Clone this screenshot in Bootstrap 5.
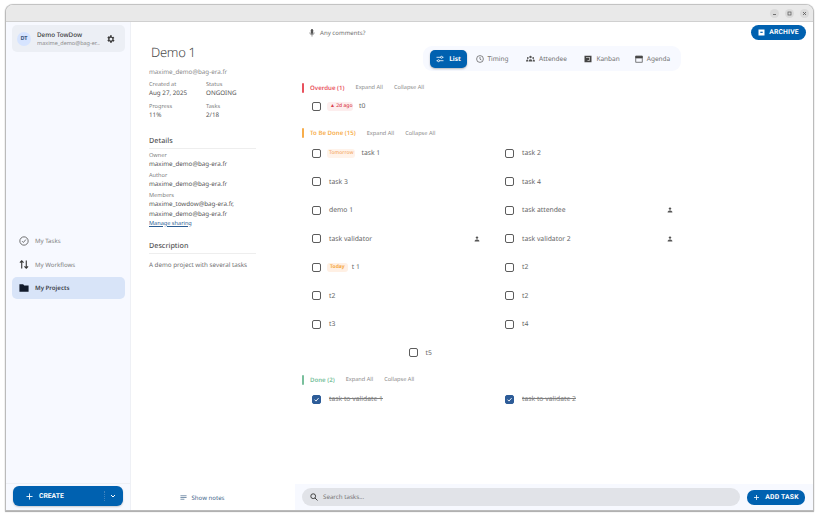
<!DOCTYPE html>
<html lang="en">
<head>
<meta charset="utf-8">
<title>Demo 1</title>
<link href="https://cdn.jsdelivr.net/npm/bootstrap@5.3.0/dist/css/bootstrap.min.css" rel="stylesheet">
<style>
html,body{height:517px;overflow:hidden;background:#fff}
body{font-family:"Noto Sans",sans-serif;font-size:7px;color:#555;padding:5px 6px 7px 6px;text-rendering:geometricPrecision}
.win{width:807px;height:505px;border-radius:7px 7px 0 0;box-shadow:0 0 1px 1px #bdbdbd,0 1px 1px 1px #a8a8a8;overflow:hidden;background:#fff;display:flex;flex-direction:column}
.tbar{height:17px;flex:none;background:#e9e9e9;border-bottom:1px solid #d0d0d0;padding-right:4px;gap:6px}
.wbtn{width:9px;height:9px;border-radius:50%;background:#dadada;display:flex;align-items:center;justify-content:center}
.wmain{flex:1;min-height:0}
.side{width:125px;flex:none;background:#f7f9ff;border-right:1px solid #eef0f5;padding:3px 5px 4px 6px}
.acct{height:27px;background:#eceff5;border-radius:5px;padding:0 9px 0 5px;gap:6px}
.avat{width:14px;height:14px;border-radius:50%;background:#d6e4ff;color:#3d5a80;font-size:5.5px;font-weight:700;display:flex;align-items:center;justify-content:center;flex:none}
.aname{font-size:6.3px;font-weight:500;color:#3a3a3a;line-height:8px}
.amail{font-size:5.5px;color:#8a8a8a;line-height:8px;white-space:nowrap}
.snav{height:22px;border-radius:5px;padding:0 7px;gap:6px;font-size:6.1px;color:#808080;margin-bottom:1.5px}
.snav.act{background:#d8e4f8;color:#3a3f4a;font-weight:600;margin-bottom:0}
.navgap{height:184px;flex:none}
.sfoot{border-top:1px solid #eef0f5;margin:0 -5px 0 -6px;padding:2px 6px 0 7px}
.crbtn{height:20px;width:110px;background:#0061b0;color:#fff;border-radius:6px;font-family:Roboto,sans-serif;font-size:6.8px;font-weight:700;padding:0 7px 0 13px;gap:6px;box-shadow:0 1px 2px #0003}
.crsep{border-left:1px dotted #3f83bd;height:10px;margin-right:-1px}
.proj{width:164px;flex:none;padding:0 0 0 18px}
.ptitle{font-size:13px;font-weight:300;letter-spacing:-.3px;color:#4a4a4a;line-height:20px;margin:20px 0 0 2px}
.pmail{font-size:6.25px;color:#8a8a8a;line-height:9px;margin-top:5px;margin-bottom:4px}
.lbl{font-size:5.6px;color:#808080;line-height:8px}
.val{font-size:6.25px;color:#555;line-height:10px}
.mcol{width:57px}
.stat2{margin-top:4px}
.sec{width:107px;font-size:7.2px;font-weight:500;color:#555;line-height:11px;border-bottom:1px solid #eee;padding-bottom:1px}
.sec1{margin-top:15.5px}
.sec2{margin-top:14.5px}
.g1{margin-top:2px}
.g2{margin-top:2px}
.mshare{font-size:5.6px;color:#2b5d93;text-decoration:underline;line-height:8px;display:block}
.ddesc{margin-top:6px;color:#707070}
.notes{height:25px;color:#46688c;font-size:6.1px;gap:4px;width:107px}
.mpane{flex:1;min-width:0}
.mtop{height:24px;padding:3px 7px 0 14px}
.cmt{font-size:6.1px;color:#707070;gap:5px;height:15px}
.arcbtn{height:15px;width:55px;background:#0061b0;color:#fff;border-radius:8px;font-family:Roboto,sans-serif;font-size:6.8px;font-weight:700;gap:4px;letter-spacing:.15px}
.tabwrap{height:25px;width:258px;background:#f7f9ff;border-radius:9px;margin-left:128px;padding:0 7px;gap:17.5px}
.tabi{height:18px;font-size:6.5px;color:#707070;gap:4px;flex:none}
.tabi.act{background:#0061b0;color:#fff;font-weight:700;border-radius:5px;width:37px;justify-content:center;box-shadow:0 1px 2px #0004;margin-right:-9px;gap:5px}
.tabi.tend{margin-left:-2.5px}
.lscroll{flex:1;min-height:0;padding:0 0 0 7px}
.ghead{height:11px;gap:11px;font-size:6.1px}
.gh1{margin-top:11px}
.gh2{margin-top:8px}
.gh3{margin-top:7px}
.gbar{width:2px;height:10px;border-radius:1px;margin-right:-5px}
.gt{font-weight:600}
.gbtn{color:#8a8a8a;font-size:5.6px}
.tgrid{width:386px;display:flex;flex-wrap:wrap;justify-content:center;margin-left:4px}
.tleft{justify-content:flex-start;margin-top:-.5px}
.tmid{margin-top:.5px}
.titem{width:193px;height:28.5px;padding:0 19px 0 6px;gap:8px;font-size:6.8px;color:#666}
.tshort{height:27px}
.cbx{width:9px;height:9px;border:1px solid #5c5c5c;border-radius:2px;flex:none;display:flex;align-items:center;justify-content:center}
.cbx.on{background:#2d5c98;border-color:#2d5c98}
.tdone{text-decoration:line-through;color:#808080}
.chip{font-size:5px;border-radius:3px;padding:0 3px;height:9px;line-height:9px;white-space:nowrap;font-weight:500;margin:0 -2px}
.chip.red{background:#fdeeee;color:#d9404c;width:26px}
.chip.org{background:#fff3ea;color:#f4ab6c;padding:0 2px}
.chip.tod{background:#fff0e4;color:#f5a843;font-weight:700;margin-right:-4px}
.mfoot{height:26px;background:#f7f9ff;padding:0 8px 0 7px;gap:7px}
.srch{flex:1;height:18px;background:#e1e3e8;border-radius:9px;padding:0 7px 0 8px;gap:5px;font-size:6.2px;color:#777}
.addbtn{width:58px;height:15px;background:#0061b0;color:#fff;border-radius:7px;font-family:Roboto,sans-serif;font-size:6.8px;font-weight:700;gap:5px;letter-spacing:.2px}
.bg-ov{background:#e8515d}.c-ov{color:#e8515d}
.bg-td{background:#f7ad4b}.c-td{color:#f7ad4b}
.bg-dn{background:#79bf9c}.c-dn{color:#79bf9c}
</style>
</head>
<body>
<div class="win">
  <div class="tbar d-flex align-items-center justify-content-end">
    <span class="wbtn"><svg width="5" height="5" viewBox="0 0 5 5"><path d="M1 3.500h3" stroke="#555" stroke-width=".8"/></svg></span>
    <span class="wbtn"><svg width="5" height="5" viewBox="0 0 5 5"><rect x="1" y="1" width="3" height="3" fill="none" stroke="#555" stroke-width=".7"/></svg></span>
    <span class="wbtn"><svg width="5" height="5" viewBox="0 0 5 5"><path d="M1 1l3 3M4 1L1 4" stroke="#555" stroke-width=".8"/></svg></span>
  </div>
  <div class="wmain d-flex">
    <aside class="side d-flex flex-column">
      <div class="acct d-flex align-items-center">
        <span class="avat">DT</span>
        <div class="flex-grow-1 overflow-hidden">
          <div class="aname">Demo TowDow</div>
          <div class="amail">maxime_demo@bag-er...</div>
        </div>
        <svg width="10" height="10" viewBox="0 0 24 24" fill="#3c3c3c"><path fill-rule="evenodd" d="M19.400 13a7.500 7.500 0 0 0 0-2l2.100-1.600-2-3.500-2.500 1a7.500 7.500 0 0 0-1.700-1L15.400 2.300h-4L11 4.900a7.500 7.500 0 0 0-1.700 1l-2.500-1-2 3.500L6.900 11a7.500 7.500 0 0 0 0 2l-2.100 1.600 2 3.500 2.500-1a7.500 7.500 0 0 0 1.700 1l.4 2.600h4l.4-2.600a7.500 7.500 0 0 0 1.700-1l2.500 1 2-3.500zM13.400 15.500a3.500 3.500 0 1 1 0-7 3.500 3.500 0 0 1 0 7z" transform="translate(-1.400 .4)"/></svg>
      </div>
      <div class="mt-auto">
        <div class="snav d-flex align-items-center">
          <svg width="10" height="10" viewBox="0 0 24 24" fill="none" stroke="#555" stroke-width="2"><circle cx="12" cy="12" r="10"/><path d="M7.500 12.500l3 3 6-7"/></svg>My Tasks</div>
        <div class="snav d-flex align-items-center">
          <svg width="10" height="11" viewBox="0 0 22 24" fill="none" stroke="#333" stroke-width="2.400"><path d="M6 21V4M2 8l4-4 4 4M16 3v17M12 16l4 4 4-4"/></svg>My Workflows</div>
        <div class="snav act d-flex align-items-center">
          <svg width="10" height="10" viewBox="0 0 24 24" fill="#111a2b"><path d="M1 3h9l2.500 3H23v15H1z"/></svg>My Projects</div>
      </div>
      <div class="navgap"></div>
      <div class="sfoot">
        <div class="crbtn d-flex align-items-center">
          <svg width="7" height="7" viewBox="0 0 8 8"><path d="M4 .5v7M.5 4h7" stroke="#fff" stroke-width="1"/></svg>CREATE
          <span class="crsep ms-auto"></span>
          <svg width="6" height="6" viewBox="0 0 6 6"><path d="M1 2l2 2 2-2" stroke="#fff" fill="none" stroke-width="1"/></svg>
        </div>
      </div>
    </aside>
    <section class="proj d-flex flex-column">
      <div class="ptitle">Demo 1</div>
      <div class="pmail">maxime_demo@bag-era.fr</div>
      <div class="d-flex"><div class="mcol"><div class="lbl">Created at</div><div class="val">Aug 27, 2025</div></div><div><div class="lbl">Status</div><div class="val">ONGOING</div></div></div>
      <div class="d-flex stat2"><div class="mcol"><div class="lbl">Progress</div><div class="val">11%</div></div><div><div class="lbl">Tasks</div><div class="val">2/18</div></div></div>
      <div class="sec sec1">Details</div>
      <div class="lbl g1">Owner</div><div class="val">maxime_demo@bag-era.fr</div>
      <div class="lbl g2">Author</div><div class="val">maxime_demo@bag-era.fr</div>
      <div class="lbl g2">Members</div><div class="val">maxime_towdow@bag-era.fr,</div><div class="val">maxime_demo@bag-era.fr</div>
      <a class="mshare" href="#">Manage sharing</a>
      <div class="sec sec2">Description</div>
      <div class="val ddesc">A demo project with several tasks</div>
      <div class="notes d-flex align-items-center justify-content-center mt-auto">
        <svg width="7" height="7" viewBox="0 0 8 8"><path d="M.5 2h7M.5 4h7M.5 6h4.500" stroke="#46688c" stroke-width=".8"/></svg>Show notes</div>
    </section>
    <main class="mpane d-flex flex-column">
      <div class="mtop d-flex justify-content-between align-items-start">
        <div class="cmt d-flex align-items-center">
          <svg width="6" height="8" viewBox="0 0 6 8" fill="#555"><rect x="1.800" y="0" width="2.400" height="5" rx="1.200"/><path d="M.8 3.500a2.200 2.200 0 0 0 4.400 0M3 5.700V7.600" stroke="#555" stroke-width=".6" fill="none"/></svg>
          Any comments?</div>
        <div class="arcbtn d-flex align-items-center justify-content-center">
          <svg width="7" height="7" viewBox="0 0 7 7"><path d="M.5.500h6v6h-6z" fill="#fff"/><rect x="2.300" y="2.700" width="2.400" height="1.200" fill="#0061b0"/></svg>ARCHIVE</div>
      </div>
      <div class="tabwrap d-flex align-items-center">
        <div class="tabi act d-flex align-items-center"><svg width="8" height="8" viewBox="0 0 8 8" fill="none" stroke="#fff" stroke-width=".8"><path d="M.5 2.300h7M.5 5.700h7"/><circle cx="5.500" cy="2.300" r="1" fill="#0061b0"/><circle cx="2.500" cy="5.700" r="1" fill="#0061b0"/></svg>List</div>
        <div class="tabi d-flex align-items-center"><svg width="8" height="8" viewBox="0 0 8 8" fill="none" stroke="#555" stroke-width=".7"><circle cx="4" cy="4" r="3.400"/><path d="M4 2v2.200l1.400.8"/></svg>Timing</div>
        <div class="tabi d-flex align-items-center"><svg width="9" height="7" viewBox="0 0 9 7" fill="#555"><circle cx="4.500" cy="2" r="1.200"/><circle cx="1.800" cy="3" r=".9"/><circle cx="7.200" cy="3" r=".9"/><path d="M2.500 6.500c0-3 4-3 4 0zM0 6.500c0-2.200 2-2.200 2-1.500v1.500zM9 6.500c0-2.200-2-2.200-2-1.500v1.500z"/></svg>Attendee</div>
        <div class="tabi d-flex align-items-center"><svg width="8" height="8" viewBox="0 0 8 8" fill="#444"><path d="M.5.800h7v6.400h-7z"/><path d="M2 2.500h4M5.500 2.500v3H3.500" stroke="#eee" stroke-width=".6" fill="none"/></svg>Kanban</div>
        <div class="tabi tend d-flex align-items-center"><svg width="8" height="8" viewBox="0 0 8 8" fill="none" stroke="#444" stroke-width=".7"><rect x=".8" y="1.200" width="6.400" height="6"/><path d="M.8 1.200h6.400v1.800H.8z" fill="#444"/></svg>Agenda</div>
      </div>
      <div class="lscroll d-flex flex-column">
        <div class="ghead gh1 d-flex align-items-center"><span class="gbar bg-ov"></span><span class="gt c-ov">Overdue (1)</span><span class="gbtn">Expand All</span><span class="gbtn">Collapse All</span></div>
        <div class="tgrid tleft">
          <div class="titem tshort d-flex align-items-center"><span class="cbx"></span><span class="chip red">▲ 2d ago</span><span>t0</span></div>
        </div>
        <div class="ghead gh2 d-flex align-items-center"><span class="gbar bg-td"></span><span class="gt c-td">To Be Done (15)</span><span class="gbtn">Expand All</span><span class="gbtn">Collapse All</span></div>
        <div class="tgrid tmid">
          <div class="titem d-flex align-items-center"><span class="cbx"></span><span class="chip org">Tomorrow</span><span>task 1</span></div>
          <div class="titem d-flex align-items-center"><span class="cbx"></span>task 2</div>
          <div class="titem d-flex align-items-center"><span class="cbx"></span>task 3</div>
          <div class="titem d-flex align-items-center"><span class="cbx"></span>task 4</div>
          <div class="titem d-flex align-items-center"><span class="cbx"></span>demo 1</div>
          <div class="titem d-flex align-items-center justify-content-between"><span class="d-flex align-items-center gap-2"><span class="cbx"></span>task attendee</span><svg width="6" height="6" viewBox="0 0 6 6" fill="#555"><circle cx="3" cy="1.600" r="1.200"/><path d="M.6 5.500c0-2.600 4.800-2.600 4.800 0z"/></svg></div>
          <div class="titem d-flex align-items-center justify-content-between"><span class="d-flex align-items-center gap-2"><span class="cbx"></span>task validator</span><svg width="6" height="6" viewBox="0 0 6 6" fill="#555"><circle cx="3" cy="1.600" r="1.200"/><path d="M.6 5.500c0-2.600 4.800-2.600 4.800 0z"/></svg></div>
          <div class="titem d-flex align-items-center justify-content-between"><span class="d-flex align-items-center gap-2"><span class="cbx"></span>task validator 2</span><svg width="6" height="6" viewBox="0 0 6 6" fill="#555"><circle cx="3" cy="1.600" r="1.200"/><path d="M.6 5.500c0-2.600 4.800-2.600 4.800 0z"/></svg></div>
          <div class="titem d-flex align-items-center"><span class="cbx"></span><span class="chip tod">Today</span><span>t 1</span></div>
          <div class="titem d-flex align-items-center"><span class="cbx"></span>t2</div>
          <div class="titem d-flex align-items-center"><span class="cbx"></span>t2</div>
          <div class="titem d-flex align-items-center"><span class="cbx"></span>t2</div>
          <div class="titem d-flex align-items-center"><span class="cbx"></span>t3</div>
          <div class="titem d-flex align-items-center"><span class="cbx"></span>t4</div>
          <div class="titem d-flex align-items-center"><span class="cbx"></span>t5</div>
        </div>
        <div class="ghead gh3 d-flex align-items-center"><span class="gbar bg-dn"></span><span class="gt c-dn">Done (2)</span><span class="gbtn">Expand All</span><span class="gbtn">Collapse All</span></div>
        <div class="tgrid">
          <div class="titem d-flex align-items-center"><span class="cbx on"><svg width="7" height="7" viewBox="0 0 7 7"><path d="M1.500 3.600l1.500 1.500 2.600-3" stroke="#fff" fill="none" stroke-width=".9"/></svg></span><span class="tdone">task to validate 1</span></div>
          <div class="titem d-flex align-items-center"><span class="cbx on"><svg width="7" height="7" viewBox="0 0 7 7"><path d="M1.500 3.600l1.500 1.500 2.600-3" stroke="#fff" fill="none" stroke-width=".9"/></svg></span><span class="tdone">task to validate 2</span></div>
        </div>
      </div>
      <div class="mfoot d-flex align-items-center">
        <div class="srch d-flex align-items-center"><svg width="8" height="8" viewBox="0 0 8 8" fill="none" stroke="#444" stroke-width="1"><circle cx="3.200" cy="3.200" r="2.400"/><path d="M5 5l2.500 2.500"/></svg>Search tasks...</div>
        <div class="addbtn d-flex align-items-center justify-content-center"><svg width="7" height="7" viewBox="0 0 7 7"><path d="M3.500 1v5M1 3.500h5" stroke="#fff" stroke-width=".8"/></svg>ADD TASK</div>
      </div>
    </main>
  </div>
</div>
<script src="https://cdn.jsdelivr.net/npm/bootstrap@5.3.0/dist/js/bootstrap.bundle.min.js"></script>
</body>
</html>
